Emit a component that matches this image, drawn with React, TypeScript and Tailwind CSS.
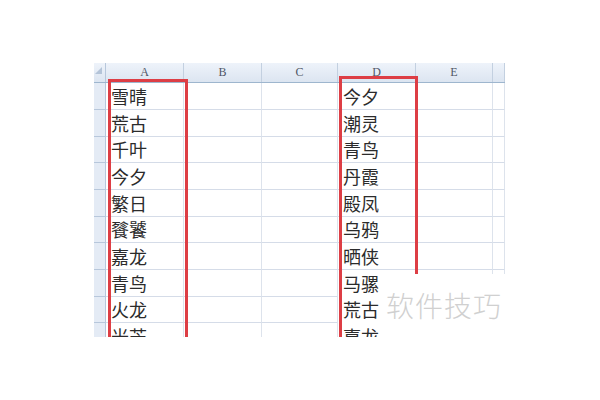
const colA = ["雪晴", "荒古", "千叶", "今夕", "繁日", "餮饕", "嘉龙", "青鸟", "火龙", "光芒"];
const colD = ["今夕", "潮灵", "青鸟", "丹霞", "殿凤", "乌鸦", "晒侠", "马骡", "荒古", "嘉龙"];
const rowHeights = [27, 27, 26, 27, 27, 26, 27, 27, 26, 27];

const columns = [
  { key: "A", width: "w-[78px]" },
  { key: "B", width: "w-[78px]" },
  { key: "C", width: "w-[76px]" },
  { key: "D", width: "w-[78px]" },
  { key: "E", width: "w-[77px]" },
  { key: "", width: "w-[12px]" },
];

const cellFont = { fontFamily: '"Noto Sans CJK SC", "Noto Sans", sans-serif' };

function HeaderRow() {
  return (
    <div className="flex h-[20px] border-b border-[#9eb6ce] bg-gradient-to-b from-[#eef3fa] to-[#dce5f1]">
      <div className="relative w-[12px] shrink-0 border-r border-[#b7c7db]">
        <svg className="absolute left-[1px] top-[4px]" width="7" height="7" viewBox="0 0 7 7">
          <path d="M7 0 L7 7 L0 7 Z" fill="#b4c4d8" />
        </svg>
      </div>
      {columns.map((c) => (
        <div
          key={c.key || "F"}
          className={`${c.width} shrink-0 border-r border-[#c3d0e0] text-center text-[12px] leading-[19px] text-[#4f5666]`}
          style={{ fontFamily: '"Liberation Serif", serif' }}
        >
          {c.key}
        </div>
      ))}
    </div>
  );
}

function SheetRow({ index }: { index: number }) {
  const h = rowHeights[index];
  // rows 8+ of column D sit under the watermark patch, no grid line there
  const covered = index >= 7;
  return (
    <div className="flex" style={{ height: h }}>
      <div className="w-[12px] shrink-0 border-r border-b border-[#b7c7db] bg-[#e4ebf5]" />
      {columns.map((c) => {
        const text = c.key === "A" ? colA[index] : c.key === "D" ? colD[index] : "";
        const noLine = covered && c.key === "D";
        return (
          <div
            key={c.key || "F"}
            className={`${c.width} shrink-0 border-r border-b ${
              noLine ? "border-b-transparent" : "border-b-[#d5dce8]"
            } border-r-[#dde3ec] pl-[5px] text-[18px] text-[#2b2b2b]`}
            style={{ ...cellFont, lineHeight: `${h - 1}px` }}
          >
            {text}
          </div>
        );
      })}
    </div>
  );
}

export default function App() {
  return (
    <div className="h-[400px] w-[600px] bg-white pl-[94px] pt-[63px]">
      <div className="relative h-[274px] w-[411px] overflow-hidden">
        <HeaderRow />
        {rowHeights.map((_, i) => (
          <SheetRow key={i} index={i} />
        ))}

        <div className="absolute left-[14px] top-[16px] h-[300px] w-[80px] border-[3px] border-[#dd3e45]" />
        <div className="absolute left-[245px] top-[13px] h-[300px] w-[79px] border-[3px] border-[#dd3e45]" />

        <div className="absolute left-[290px] top-[211px] h-[70px] w-[130px] bg-white">
          <div
            className="pl-[2px] pt-[15px] text-[28px] font-light leading-[32px] tracking-[1px] text-[#d0d0d0]"
            style={cellFont}
          >
            软件技巧
          </div>
        </div>
      </div>
    </div>
  );
}
